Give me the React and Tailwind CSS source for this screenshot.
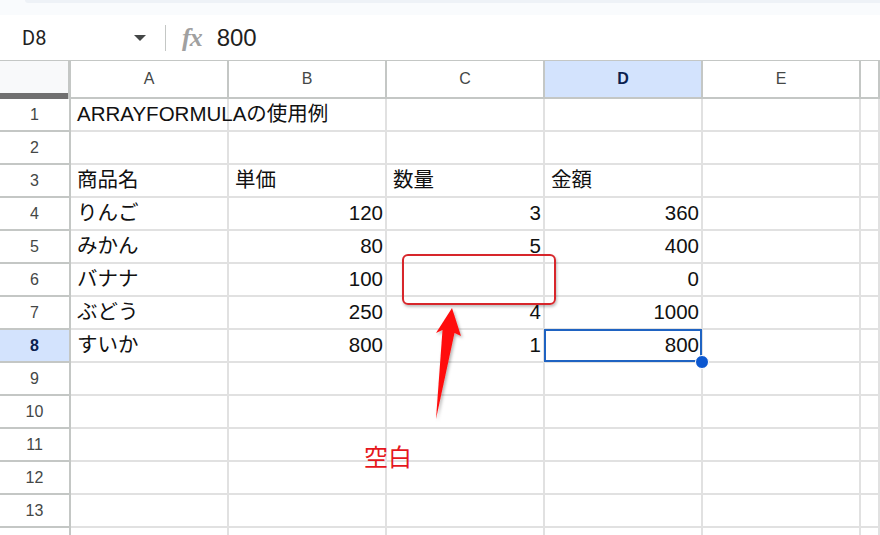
import React from "react";

const FONT = "font-['Liberation_Sans','Noto_Sans_CJK_JP',sans-serif]";

const rows = [
  ["ARRAYFORMULAの使用例", "", "", "", ""],
  ["", "", "", "", ""],
  ["商品名", "単価", "数量", "金額", ""],
  ["りんご", "120", "3", "360", ""],
  ["みかん", "80", "5", "400", ""],
  ["バナナ", "100", "", "0", ""],
  ["ぶどう", "250", "4", "1000", ""],
  ["すいか", "800", "1", "800", ""],
  ["", "", "", "", ""],
  ["", "", "", "", ""],
  ["", "", "", "", ""],
  ["", "", "", "", ""],
  ["", "", "", "", ""],
  ["", "", "", "", ""],
];

const isNum = (s) => /^\d+$/.test(s);

export default function App() {
  return (
    <div className={`w-[880px] h-[535px] overflow-hidden bg-white relative ${FONT}`}>
      {/* top strip */}
      <div className="h-[15px] bg-[#f9fbfd]">
        <div className="ml-[25px] h-[3px] bg-[#eef2f7] rounded-bl-[8px]" />
      </div>

      {/* formula bar */}
      <div className="h-[45px] flex items-center">
        <div className="w-[165px] flex items-center pl-[22px] pr-[19px] justify-between">
          <span className="text-[20px] text-[#1f1f1f] font-['Roboto',sans-serif]">D8</span>
          <svg width="12" height="6" viewBox="0 0 12 6">
            <path d="M0 0 L12 0 L6 6 Z" fill="#444746" />
          </svg>
        </div>
        <div className="w-px h-[26px] bg-[#c4c7c5]" />
        <span className="ml-[16px] text-[26px] leading-none italic text-[#a0a0a0] font-['Liberation_Serif',serif] font-bold tracking-[-1px]">fx</span>
        <span className="ml-[15px] text-[24px] text-[#1f1f1f]">800</span>
      </div>

      {/* column headers */}
      <div className="grid grid-cols-[71px_158px_158px_158px_158px_158px_1fr] h-[39px] border-t border-[#c4c7c5]">
        <div className="bg-[#f8f9fa] border-r-[3px] border-[#c4c7c5] flex flex-col">
          <div className="flex-1" />
          <div className="h-[6px] bg-[#707070]" />
        </div>
        {["A", "B", "C", "D", "E", ""].map((c, i) => (
          <div
            key={i}
            className={`flex items-center justify-center border-b-2 border-r-2 border-[#c4c7c5] text-[16px] ${
              c === "D" ? "bg-[#d3e3fd] font-bold text-[#0b1f4f]" : "text-[#444746]"
            }`}
          >
            {c}
          </div>
        ))}
      </div>

      {/* rows */}
      {rows.map((r, ri) => {
        const rn = ri + 1;
        const sel = rn === 8;
        return (
          <div
            key={ri}
            className="grid grid-cols-[71px_158px_158px_158px_158px_158px_1fr] h-[33px]"
          >
            <div
              className={`flex items-center justify-center border-r-2 border-b-2 border-[#c4c7c5] text-[16px] ${
                sel ? "bg-[#d3e3fd] font-bold text-[#0b1f4f]" : "text-[#444746]"
              }`}
            >
              {rn <= 13 ? rn : ""}
            </div>
            {[...r, ""].map((v, ci) => {
              const active = sel && ci === 3;
              const spill = ci === 0 && rn === 1;
              return (
                <div
                  key={ci}
                  className={`relative flex items-center border-r-2 border-b-2 border-[#e1e1e1] text-[20.5px] text-[#111] whitespace-nowrap ${
                    isNum(v) ? "justify-end pr-[2px]" : "pl-[6px]"
                  } ${spill || active ? "overflow-visible z-10" : "overflow-hidden"}`}
                >
                  {v}
                  {active && (
                    <>
                      <div className="absolute left-[-1px] top-[-1px] right-[-1px] bottom-[-1px] border-2 border-[#1f63c2]" />
                      <div className="absolute right-[-8px] bottom-[-8px] w-[14px] h-[14px] rounded-full bg-[#0b57d0] border border-white" />
                    </>
                  )}
                </div>
              );
            })}
          </div>
        );
      })}

      {/* annotation: red box */}
      <div className="absolute left-[402px] top-[254px] w-[154px] h-[51px] border-2 border-[#d7262b] rounded-[6px] shadow-[1px_2px_3px_rgba(0,0,0,0.25)]" />

      {/* annotation: arrow */}
      <svg className="absolute left-0 top-0 pointer-events-none" width="880" height="535">
        <defs>
          <filter id="sh" x="-50%" y="-50%" width="200%" height="200%">
            <feDropShadow dx="1.5" dy="2" stdDeviation="1.5" floodColor="#000" floodOpacity="0.3" />
          </filter>
        </defs>
        <polygon
          points="452,308 461,336 454.5,333 436,419 442.5,330 436,333"
          fill="#ff1010"
          filter="url(#sh)"
        />
      </svg>

      {/* annotation: label */}
      <div className="absolute left-[364px] top-[441px] text-[24px] leading-[30px] text-[#e5171d] font-['Noto_Sans_CJK_JP',sans-serif]">
        空白
      </div>
    </div>
  );
}
